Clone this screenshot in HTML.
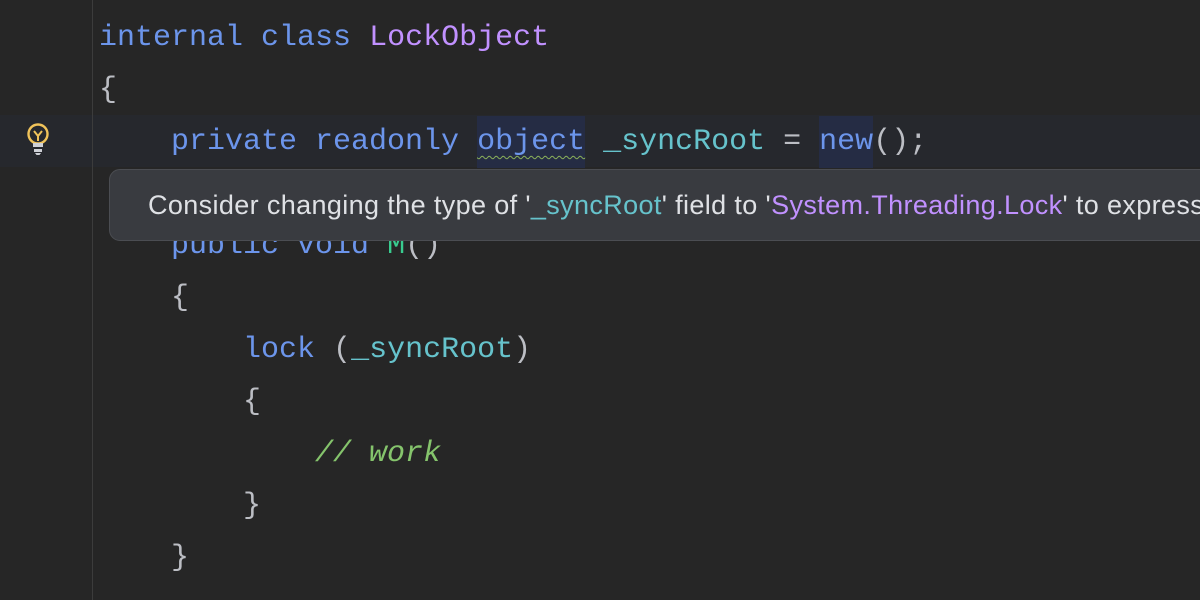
<!DOCTYPE html>
<html><head><style>
html,body{margin:0;padding:0;width:1200px;height:600px;overflow:hidden;background:#262626;}
.wrap{position:absolute;left:0;top:0;width:1200px;height:600px;overflow:hidden;}
.gl{position:absolute;left:92px;top:0;width:1px;height:600px;background:#3c3c3c;}
.cur{position:absolute;left:0;top:115px;width:1200px;height:52px;background:#26282d;}
.code{position:absolute;left:99px;top:12px;font-family:"Liberation Mono",monospace;font-size:30px;line-height:52px;color:#bcbec4;white-space:pre;}
.k{color:#6c95eb}.c{color:#c191ff}.f{color:#66c3cc}.m{color:#39cc8f}.cm{color:#85c46c;font-style:italic}
.hl{background:#252c44;display:inline-block;line-height:52px;}
.wv{text-decoration:underline wavy #8bb25a;text-decoration-thickness:1px;text-underline-offset:6px;}
.tipc{position:absolute;left:109px;top:169px;width:1091px;height:72px;overflow:hidden;}
.tip{position:absolute;left:0;top:0;width:1120px;height:72px;background:#393b40;border:1px solid #4b4d52;border-radius:11px;box-sizing:border-box;font-family:"Liberation Sans",sans-serif;font-size:27px;letter-spacing:0.37px;color:#dfe1e5;line-height:70px;padding-left:38px;white-space:nowrap;overflow:hidden;}
.tip .f{color:#66c3cc}.tip .c{color:#c191ff}
</style></head><body>
<div class="wrap">
<div class="cur"></div>
<div class="gl"></div>
<svg style="position:absolute;left:24px;top:122px" width="28" height="36" viewBox="0 0 28 36">
<circle cx="14" cy="12" r="9.5" fill="none" stroke="#f0c35a" stroke-width="2.4"/>
<path d="M10 9 L14 14 L18 9 M14 14 V19" fill="none" stroke="#f0c35a" stroke-width="2"/>
<path d="M9 21 H19 V25 H9Z M10 27 H18 V30 H10Z" fill="#ced0d6"/>
<path d="M11 31 H17 L15.5 33 H12.5Z" fill="#ced0d6"/>
</svg>
<div class="code"><span class="k">internal class</span> <span class="c">LockObject</span>
{
    <span class="k">private readonly</span> <span class="hl"><span class="k wv">object</span></span> <span class="f">_syncRoot</span> = <span class="hl"><span class="k">new</span></span>();

    <span class="k">public void</span> <span class="m">M</span>()
    {
        <span class="k">lock</span> (<span class="f">_syncRoot</span>)
        {
            <span class="cm">// work</span>
        }
    }</div>
<div class="tipc"><div class="tip">Consider changing the type of '<span class="f">_syncRoot</span>' field to '<span class="c">System.Threading.Lock</span>' to express</div></div>
</div>
</body></html>
